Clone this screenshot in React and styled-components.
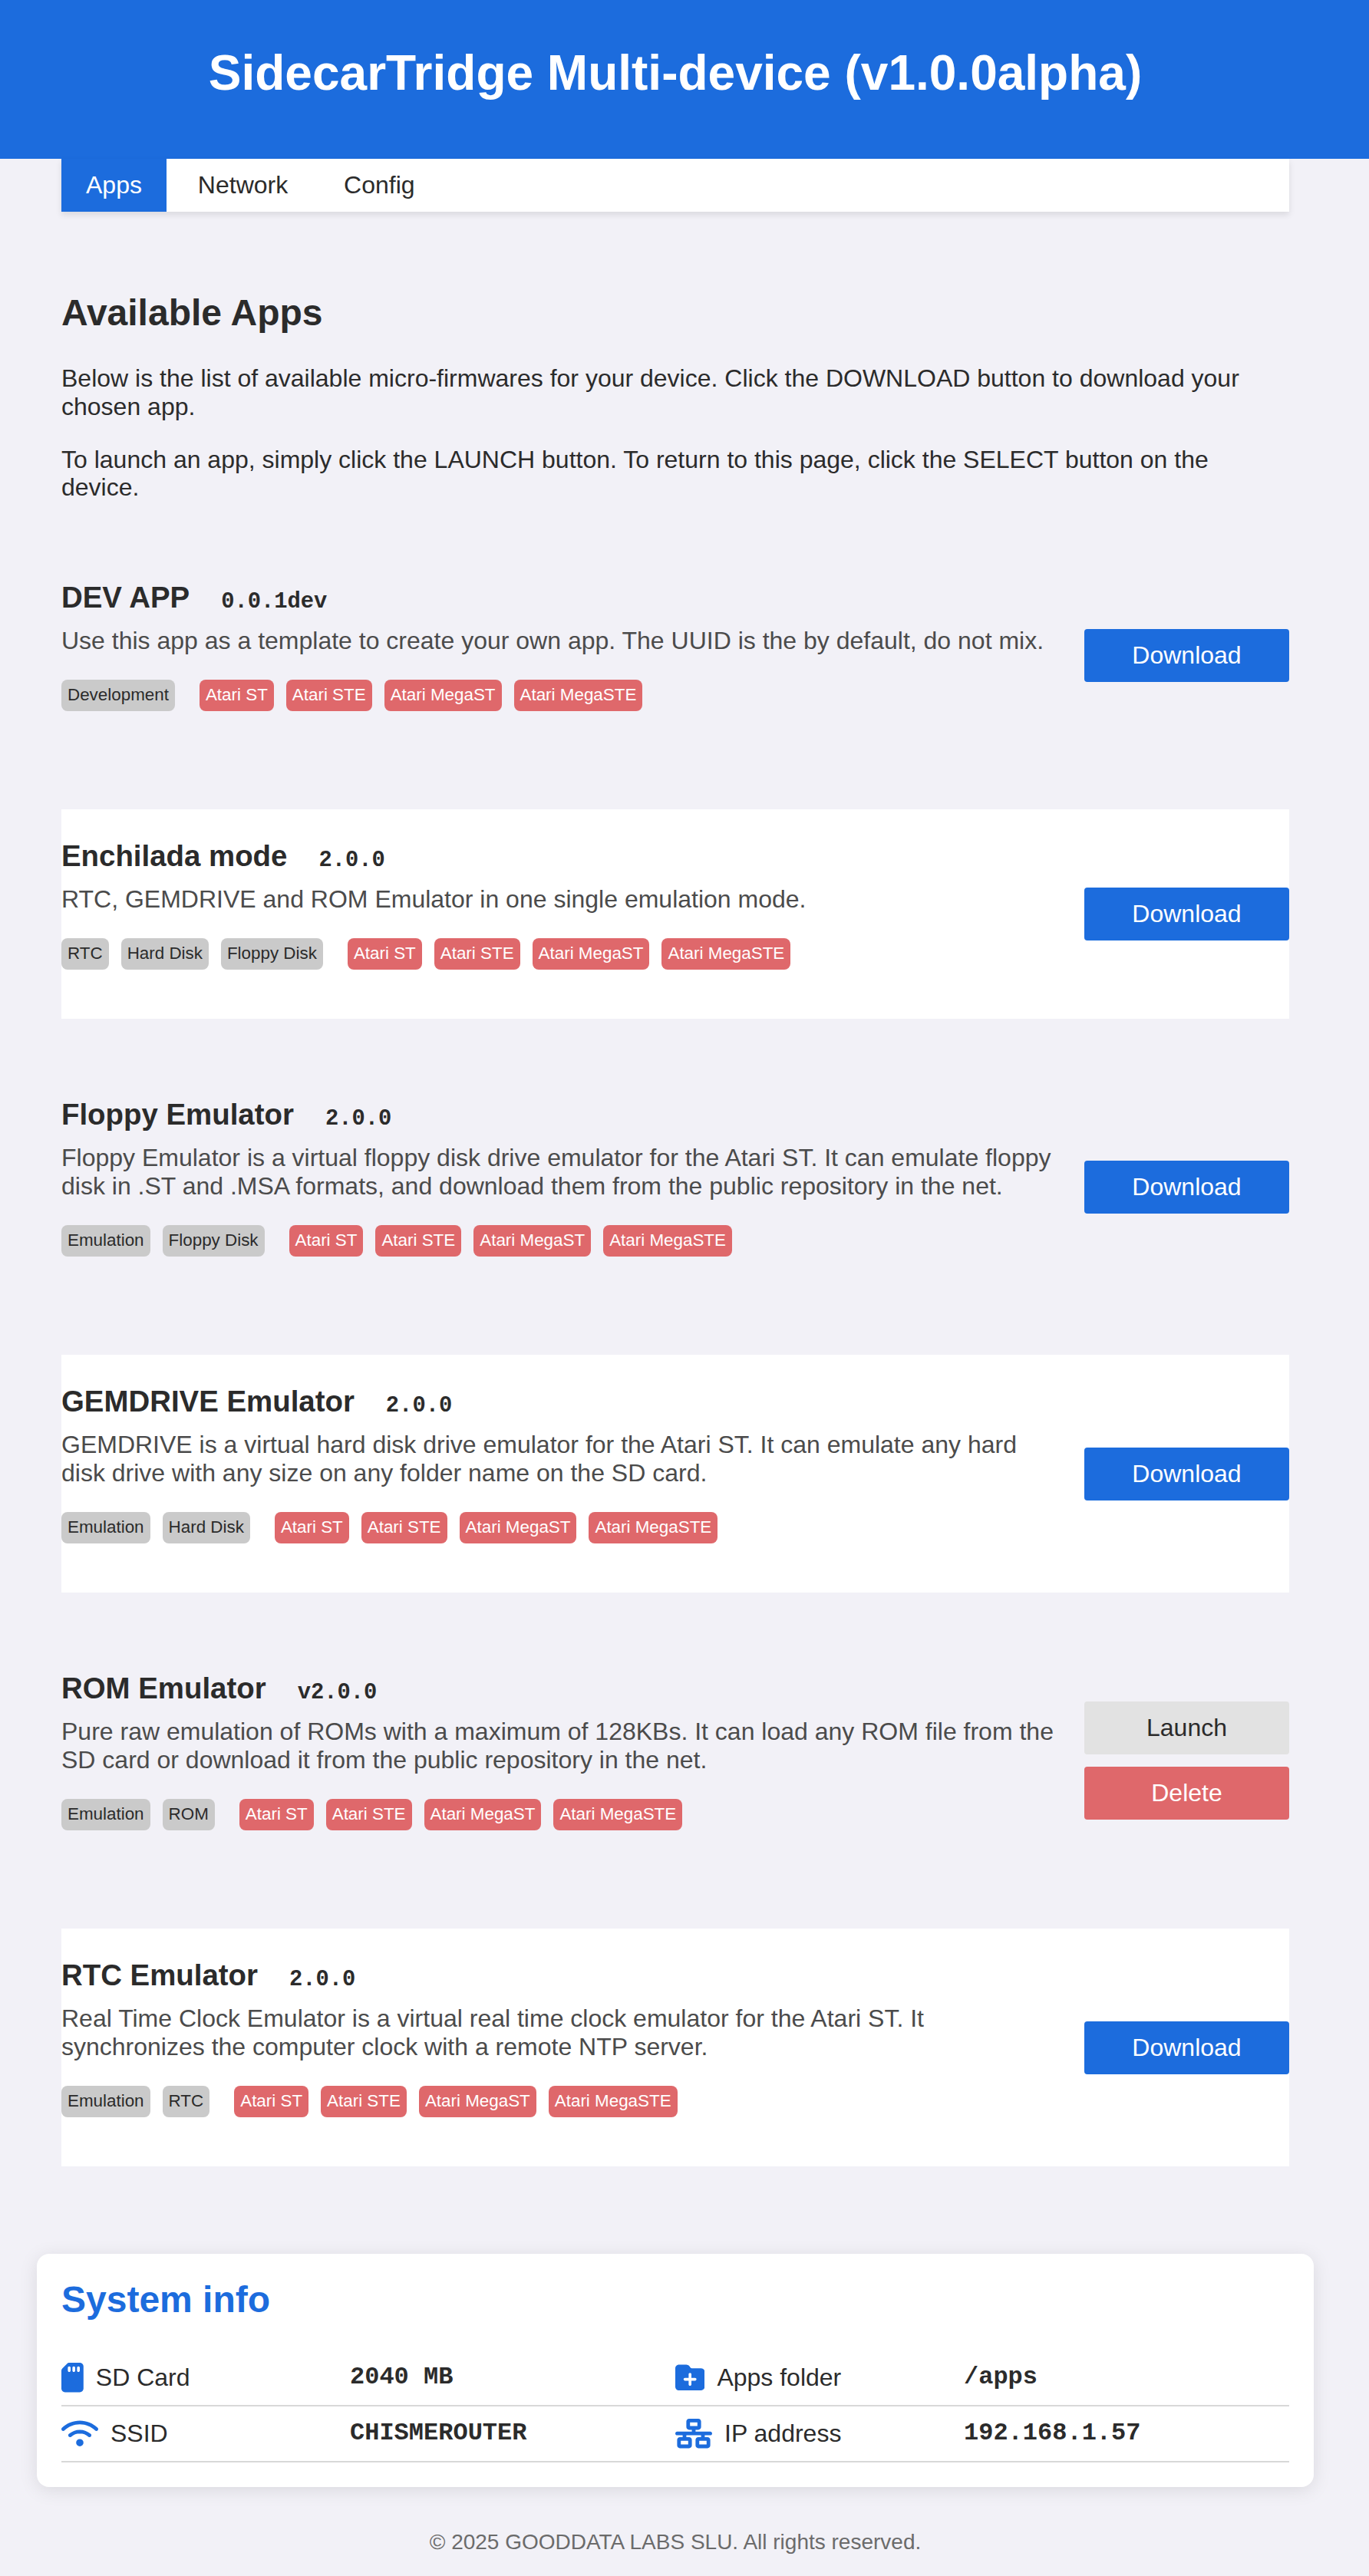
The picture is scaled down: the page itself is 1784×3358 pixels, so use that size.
import React from "react";
import styled, { createGlobalStyle } from "styled-components";
import { FaSdCard, FaWifi, FaFolderPlus, FaNetworkWired } from "react-icons/fa6";

const blue = "#1c6cdd";
const red = "#df686b";
const ink = "#2b2b2b";
const sans = `"Liberation Sans", Arial, Helvetica, sans-serif`;
const mono = `"Liberation Mono", "Courier New", monospace`;

const GlobalStyle = createGlobalStyle`
  * { box-sizing: border-box; }
  body {
    margin: 0;
    background: #f2f1f7;
    color: ${ink};
    font-family: ${sans};
    font-size: 32px;
    line-height: 36.8px;
  }
`;

const Page = styled.div`
  min-height: 3358px;
`;

const Header = styled.header`
  height: 207px;
  padding: 59px 24px 0 0;
  background: ${blue};
  color: #fff;
  text-align: center;
`;

const Title = styled.h1`
  margin: 0;
  font-size: 64px;
  line-height: 73px;
`;

const Container = styled.div`
  width: 1600px;
  margin-left: 80px;
`;

const Nav = styled.nav`
  display: flex;
  gap: 8.9px;
  height: 69px;
  background: #fff;
  box-shadow: 0 4px 8px rgba(0, 0, 0, 0.1);
`;

const NavLink = styled.a`
  padding: 16px 32px;
  background: ${(p) => (p.$active ? blue : "transparent")};
  color: ${(p) => (p.$active ? "#fff" : ink)};
`;

const Intro = styled.section`
  padding: 104px 0 64px;
`;

const Heading = styled.h2`
  margin: 0;
  font-size: 48px;
  line-height: 55px;
  color: ${(p) => p.$color || ink};
`;

const Paragraph = styled.p`
  margin: ${(p) => p.$top}px 0 0;
`;

const AppList = styled.main`
  display: flex;
  flex-direction: column;
  gap: 64px;
`;

const AppCard = styled.article`
  display: flex;
  align-items: center;
  height: ${(p) => (p.$tall ? 310 : 273)}px;
  background: ${(p) => (p.$white ? "#fff" : "transparent")};
`;

const AppInfo = styled.div`
  width: 1333px;
  height: 100%;
  padding: 39px 32px 0 0;
`;

const AppTitle = styled.h3`
  display: flex;
  align-items: baseline;
  gap: 41px;
  height: 43px;
  margin: 0;
  font-size: 38.4px;
  line-height: 43px;
`;

const Version = styled.span`
  font-family: ${mono};
  font-size: 28.8px;
`;

const Description = styled.p`
  margin: 17px 0 0;
  color: #4b4b4b;
`;

const Tags = styled.div`
  display: flex;
  gap: 32px;
  margin-top: 32px;
`;

const TagGroup = styled.div`
  display: flex;
  gap: 16px;
`;

const Tag = styled.span`
  height: 41px;
  padding: 7px 8px 0;
  border-radius: 8px;
  font-size: 22.4px;
  line-height: 26px;
  background: ${(p) => (p.$computer ? red : "#cacaca")};
  color: ${(p) => (p.$computer ? "#fff" : ink)};
`;

const Actions = styled.div`
  display: flex;
  flex-direction: column;
  gap: 16px;
  width: 267px;
`;

const buttonColors = {
  Download: [blue, "#fff"],
  Launch: ["#e2e2e2", ink],
  Delete: [red, "#fff"],
};

const Button = styled.button`
  height: 69px;
  padding: 0;
  border: 0;
  border-radius: 4px;
  font: 32px/37px ${sans};
  background: ${(p) => buttonColors[p.$kind][0]};
  color: ${(p) => buttonColors[p.$kind][1]};
`;

const SystemCard = styled.section`
  width: 1664px;
  height: 304px;
  margin: 114px 0 0 48px;
  padding: 32px;
  border-radius: 16px;
  background: #fff;
  box-shadow: 0 4px 24px rgba(0, 0, 0, 0.1);
`;

const InfoTable = styled.div`
  margin-top: 39px;
`;

const InfoRow = styled.div`
  display: grid;
  grid-template-columns: 376px 424px 376px 424px;
  align-items: center;
  height: 73px;
  border-bottom: 2px solid #d8d8d8;
`;

const InfoLabel = styled.div`
  display: flex;
  align-items: center;
  gap: 16px;

  svg {
    flex: none;
    width: ${(p) => p.$iconWidth}px;
    height: 38.4px;
    color: ${blue};
  }
`;

const InfoValue = styled.strong`
  font-family: ${mono};
`;

const Footer = styled.footer`
  padding: 55px 24px 0 0;
  color: #6b6b6b;
  font-size: 28px;
  line-height: 33px;
  text-align: center;
`;

const computers = ["Atari ST", "Atari STE", "Atari MegaST", "Atari MegaSTE"];

const apps = [
  {
    name: "DEV APP",
    version: "0.0.1dev",
    text: "Use this app as a template to create your own app. The UUID is the by default, do not mix.",
    tags: ["Development"],
  },
  {
    name: "Enchilada mode",
    version: "2.0.0",
    text: "RTC, GEMDRIVE and ROM Emulator in one single emulation mode.",
    tags: ["RTC", "Hard Disk", "Floppy Disk"],
  },
  {
    name: "Floppy Emulator",
    version: "2.0.0",
    text: "Floppy Emulator is a virtual floppy disk drive emulator for the Atari ST. It can emulate floppy disk in .ST and .MSA formats, and download them from the public repository in the net.",
    tags: ["Emulation", "Floppy Disk"],
    tall: true,
  },
  {
    name: "GEMDRIVE Emulator",
    version: "2.0.0",
    text: "GEMDRIVE is a virtual hard disk drive emulator for the Atari ST. It can emulate any hard disk drive with any size on any folder name on the SD card.",
    tags: ["Emulation", "Hard Disk"],
    tall: true,
  },
  {
    name: "ROM Emulator",
    version: "v2.0.0",
    text: "Pure raw emulation of ROMs with a maximum of 128KBs. It can load any ROM file from the SD card or download it from the public repository in the net.",
    tags: ["Emulation", "ROM"],
    tall: true,
    installed: true,
  },
  {
    name: "RTC Emulator",
    version: "2.0.0",
    text: "Real Time Clock Emulator is a virtual real time clock emulator for the Atari ST. It synchronizes the computer clock with a remote NTP server.",
    tags: ["Emulation", "RTC"],
    tall: true,
  },
];

const systemInfo = [
  [
    { Icon: FaSdCard, iconWidth: 28.8, label: "SD Card", value: "2040 MB" },
    { Icon: FaFolderPlus, iconWidth: 38.4, label: "Apps folder", value: "/apps" },
  ],
  [
    { Icon: FaWifi, iconWidth: 48, label: "SSID", value: "CHISMEROUTER" },
    { Icon: FaNetworkWired, iconWidth: 48, label: "IP address", value: "192.168.1.57" },
  ],
];

function App() {
  return (
    <Page>
      <GlobalStyle />
      <Header>
        <Title>SidecarTridge Multi-device (v1.0.0alpha)</Title>
      </Header>
      <Container>
        <Nav>
          <NavLink $active>Apps</NavLink>
          <NavLink>Network</NavLink>
          <NavLink>Config</NavLink>
        </Nav>
        <Intro>
          <Heading>Available Apps</Heading>
          <Paragraph $top={40}>
            Below is the list of available micro-firmwares for your device. Click the DOWNLOAD
            button to download your chosen app.
          </Paragraph>
          <Paragraph $top={32}>
            To launch an app, simply click the LAUNCH button. To return to this page, click the
            SELECT button on the device.
          </Paragraph>
        </Intro>
        <AppList>
          {apps.map((app, i) => (
            <AppCard key={app.name} $tall={app.tall} $white={i % 2 === 1}>
              <AppInfo>
                <AppTitle>
                  {app.name}
                  <Version>{app.version}</Version>
                </AppTitle>
                <Description>{app.text}</Description>
                <Tags>
                  <TagGroup>
                    {app.tags.map((t) => (
                      <Tag key={t}>{t}</Tag>
                    ))}
                  </TagGroup>
                  <TagGroup>
                    {computers.map((t) => (
                      <Tag key={t} $computer>
                        {t}
                      </Tag>
                    ))}
                  </TagGroup>
                </Tags>
              </AppInfo>
              <Actions>
                {(app.installed ? ["Launch", "Delete"] : ["Download"]).map((kind) => (
                  <Button key={kind} $kind={kind}>
                    {kind}
                  </Button>
                ))}
              </Actions>
            </AppCard>
          ))}
        </AppList>
      </Container>
      <SystemCard>
        <Heading $color={blue}>System info</Heading>
        <InfoTable>
          {systemInfo.map((row) => (
            <InfoRow key={row[0].label}>
              {row.map(({ Icon, iconWidth, label, value }) => (
                <React.Fragment key={label}>
                  <InfoLabel $iconWidth={iconWidth}>
                    <Icon />
                    {label}
                  </InfoLabel>
                  <InfoValue>{value}</InfoValue>
                </React.Fragment>
              ))}
            </InfoRow>
          ))}
        </InfoTable>
      </SystemCard>
      <Footer>© 2025 GOODDATA LABS SLU. All rights reserved.</Footer>
    </Page>
  );
}

export default App;
